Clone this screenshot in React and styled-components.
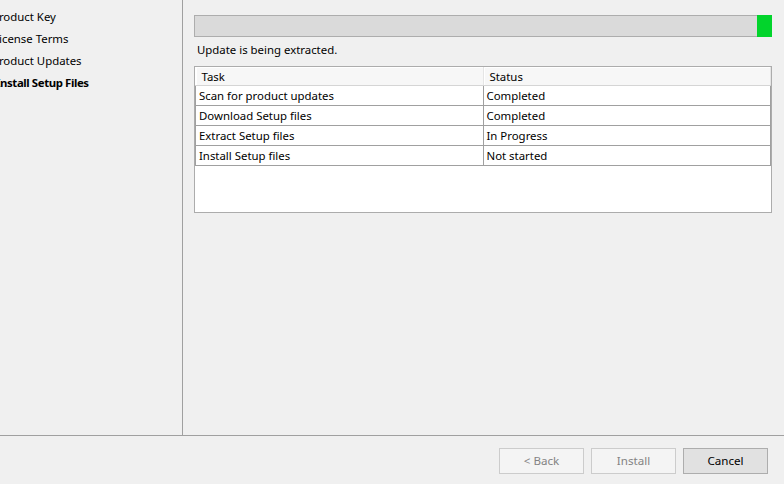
import React from 'react';
import styled, { createGlobalStyle } from 'styled-components';

const GlobalStyle = createGlobalStyle`
  html, body {
    margin: 0;
    padding: 0;
    background-color: #f0f0f0;
  }
  body {
    font-family: 'Noto Sans', 'Open Sans', 'Liberation Sans', sans-serif;
    font-size: 11.4px;
    color: #000000;
  }
`;

const Window = styled.div`
  width: 784px;
  height: 484px;
  display: flex;
  flex-direction: column;
  overflow: hidden;
  background-color: #f0f0f0;
`;

const Body = styled.div`
  display: flex;
  height: 435px;
  border-bottom: 1px solid #a0a0a0;
`;

const Sidebar = styled.ul`
  width: 182px;
  margin: 0;
  padding: 6px 0 0;
  list-style: none;
  border-right: 1px solid #a0a0a0;
  overflow: hidden;
`;

const Step = styled.li`
  margin-left: ${props => props.offset}px;
  line-height: 22px;
  white-space: nowrap;
  font-weight: ${props => (props.current ? 700 : 400)};
  letter-spacing: ${props => (props.current ? '-0.4px' : '0')};
`;

const Content = styled.div`
  flex: 1;
  padding: 15px 12px 0 11px;
  display: flex;
  flex-direction: column;
`;

const ProgressTrack = styled.div`
  height: 22px;
  box-sizing: border-box;
  border: 1px solid #adadad;
  background-color: #dadada;
  display: flex;
  justify-content: flex-end;
`;

const ProgressChunk = styled.div`
  width: 15px;
  margin: -1px -1px -1px 0;
  background-color: #02d42c;
`;

const StatusText = styled.div`
  margin: 4px 0 0 3px;
  line-height: 18px;
`;

const TableBox = styled.div`
  margin-top: 7px;
  height: 147px;
  box-sizing: border-box;
  border: 1px solid #acacac;
  background-color: #ffffff;
`;

const Grid = styled.table`
  width: 100%;
  border-collapse: collapse;
  border-spacing: 0;
  table-layout: fixed;
`;

const HeadCell = styled.th`
  height: 17px;
  padding: 0 0 0 6px;
  text-align: left;
  font-weight: 400;
  background-color: #f7f7f7;
  border-top: 1px solid #ffffff;
  border-right: 1px solid #e5e5e5;
  border-bottom: 1px solid #d5d5d5;
  box-shadow: inset 1px 0 0 #ffffff;
  line-height: 17px;
`;

const Cell = styled.td`
  height: 19px;
  padding: 0 0 0 3px;
  border: 1px solid #a0a0a0;
  line-height: 18px;
  white-space: nowrap;
`;

const Footer = styled.div`
  flex: 1;
  display: flex;
  justify-content: flex-end;
  align-items: flex-start;
  gap: 7px;
  padding: 12px 16px 0 0;
`;

const Button = styled.button`
  width: 85px;
  height: 26px;
  box-sizing: border-box;
  font-family: inherit;
  font-size: 11.6px;
  padding: 0 0 1px;
  border: 1px solid ${props => (props.disabled ? '#cccccc' : '#adadad')};
  background-color: ${props => (props.disabled ? '#f4f4f4' : '#e1e1e1')};
  color: ${props => (props.disabled ? '#838383' : '#000000')};
`;

const steps = [
  { name: 'Product Key', offset: -8 },
  { name: 'License Terms', offset: -7 },
  { name: 'Product Updates', offset: -8 },
  { name: 'Install Setup Files', offset: -4, current: true },
];

const tasks = [
  { id: 1, task: 'Scan for product updates', status: 'Completed' },
  { id: 2, task: 'Download Setup files', status: 'Completed' },
  { id: 3, task: 'Extract Setup files', status: 'In Progress' },
  { id: 4, task: 'Install Setup files', status: 'Not started' },
];

export default function App() {
  return (
    <Window>
      <GlobalStyle />
      <Body>
        <Sidebar>
          {steps.map(step => (
            <Step key={step.name} offset={step.offset} current={step.current}>
              {step.name}
            </Step>
          ))}
        </Sidebar>
        <Content>
          <ProgressTrack>
            <ProgressChunk />
          </ProgressTrack>
          <StatusText>Update is being extracted.</StatusText>
          <TableBox>
            <Grid>
              <thead>
                <tr>
                  <HeadCell>Task</HeadCell>
                  <HeadCell>Status</HeadCell>
                </tr>
              </thead>
              <tbody>
                {tasks.map(row => (
                  <tr key={row.id}>
                    <Cell>{row.task}</Cell>
                    <Cell>{row.status}</Cell>
                  </tr>
                ))}
              </tbody>
            </Grid>
          </TableBox>
        </Content>
      </Body>
      <Footer>
        <Button disabled>&lt; Back</Button>
        <Button disabled>Install</Button>
        <Button>Cancel</Button>
      </Footer>
    </Window>
  );
}
